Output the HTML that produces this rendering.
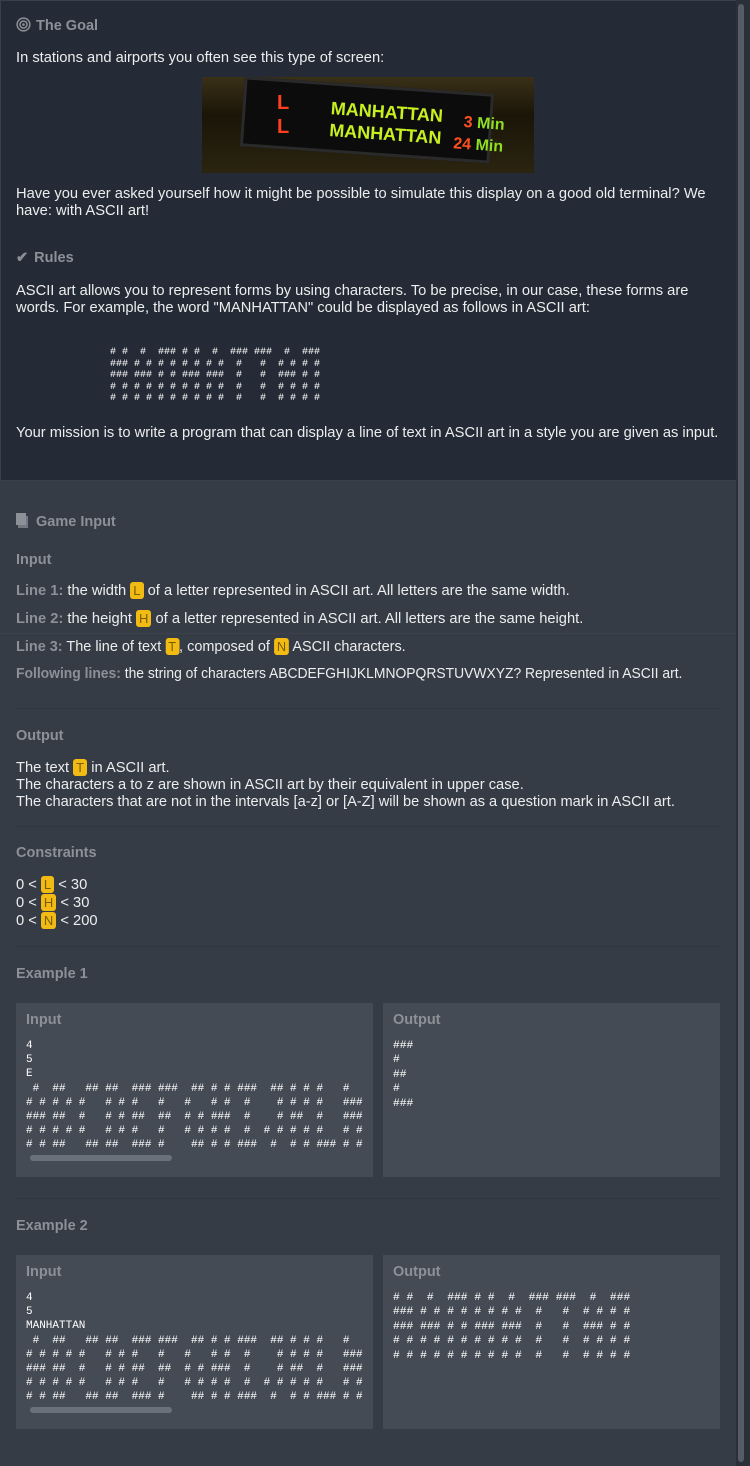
<!DOCTYPE html>
<html><head><meta charset="utf-8"><style>
*{margin:0;padding:0;box-sizing:border-box}
body{width:750px;height:1466px;background:#363c46;font-family:"Liberation Sans",sans-serif;color:#ecedee;font-size:14.7px;position:relative;overflow:hidden}
.a{position:absolute;white-space:nowrap}
.top{position:absolute;left:0;top:0;width:736px;height:481px;background:#252b36;border:1px solid #3a404a;border-right:none}
.h{font-weight:bold;color:#8c9197;font-size:14.5px}
.k{color:#8c9197;font-weight:bold}
.b{display:inline-block;background:#f2bb13;color:#7a5c00;border-radius:3px;padding:0 3px;line-height:17px;font-size:13px}
.hr{position:absolute;left:16px;width:704px;height:1px;background:#30363f}
.box{position:absolute;background:#454b55}
pre,pre.a{font-family:"Liberation Mono",monospace;color:#fff;white-space:pre}
.sb{position:absolute;left:30px;width:142px;height:6px;border-radius:3px;background:#6b717a}
</style></head><body>
<div class="top"></div>
<div style="position:absolute;left:736px;top:0;width:14px;height:1466px;background:#2a2f38"></div>
<div style="position:absolute;left:738px;top:4px;width:6px;height:1458px;background:#565c66;border-radius:3px"></div>

<div class="a h" style="left:16px;top:17px"><svg width="15" height="15" viewBox="0 0 16 16" style="vertical-align:-2px;margin-right:5px"><circle cx="8" cy="8" r="6.8" fill="none" stroke="#8c9197" stroke-width="1.6"/><circle cx="8" cy="8" r="3.8" fill="none" stroke="#8c9197" stroke-width="1.6"/><circle cx="8" cy="8" r="1.4" fill="#8c9197"/></svg>The Goal</div>
<div class="a" style="left:16px;top:50px">In stations and airports you often see this type of screen:</div>
<div class="a" style="left:202px;top:77px;width:332px;height:96px;background:linear-gradient(180deg,#3a3018,#1a1508 40%,#2a2410);overflow:hidden">
 <div style="position:absolute;left:40px;top:8px;width:250px;height:70px;background:#0c0c0c;transform:rotate(4deg);border:3px solid #2a2a2a"></div>
 <div style="position:absolute;left:75px;top:14px;color:#ff4020;font:bold 20px 'Liberation Sans Narrow','Liberation Sans',sans-serif;line-height:24px">L<br>L</div>
 <div style="position:absolute;left:128px;top:24px;color:#c8f020;font:bold 18px 'Liberation Sans Narrow','Liberation Sans',sans-serif;line-height:22px;transform:rotate(4deg)">MANHATTAN<br>MANHATTAN</div>
 <div style="position:absolute;left:252px;top:36px;color:#ff5020;font:bold 16px 'Liberation Sans Narrow',sans-serif;line-height:22px;transform:rotate(4deg)">&nbsp;&nbsp;3 <span style="color:#8ee020">Min</span><br>24 <span style="color:#8ee020">Min</span></div>
</div>
<div class="a" style="left:16px;top:186px">Have you ever asked yourself how it might be possible to simulate this display on a good old terminal? We</div>
<div class="a" style="left:16px;top:203px">have: with ASCII art!</div>

<div class="a h" style="left:16px;top:250px"><span style="margin-right:6px">✔</span>Rules</div>
<div class="a" style="left:16px;top:283px">ASCII art allows you to represent forms by using characters. To be precise, in our case, these forms are</div>
<div class="a" style="left:16px;top:300px">words. For example, the word "MANHATTAN" could be displayed as follows in ASCII art:</div>
<pre class="a" style="left:110px;top:347px;font-size:10px;line-height:11.5px"># #  #  ### # #  #  ### ###  #  ### 
### # # # # # # # #  #   #  # # # # 
### ### # # ### ###  #   #  ### # # 
# # # # # # # # # #  #   #  # # # # 
# # # # # # # # # #  #   #  # # # # </pre>
<div class="a" style="left:16px;top:425px">Your mission is to write a program that can display a line of text in ASCII art in a style you are given as input.</div>

<div class="a h" style="left:16px;top:513px"><svg width="14" height="15" viewBox="0 0 14 15" style="vertical-align:-2px;margin-right:6px"><rect x="0" y="0" width="10" height="12" fill="#8c9197"/><rect x="2" y="3" width="10" height="12" fill="#8c9197" opacity=".7"/></svg>Game Input</div>
<div class="a h" style="left:16px;top:552px">Input</div>
<div class="a" style="left:16px;top:582px"><span class="k">Line 1:</span> the width <span class="b">L</span> of a letter represented in ASCII art. All letters are the same width.</div>
<div class="a" style="left:16px;top:610px"><span class="k">Line 2:</span> the height <span class="b">H</span> of a letter represented in ASCII art. All letters are the same height.</div>
<div style="position:absolute;left:0;top:633px;width:736px;height:1px;background:#3c424c"></div>
<div class="a" style="left:16px;top:638px;transform:scaleX(0.985);transform-origin:left"><span class="k">Line 3:</span> The line of text <span class="b">T</span>, composed of <span class="b">N</span> ASCII characters.</div>
<div class="a" style="left:16px;top:666px;transform:scaleX(0.945);transform-origin:left"><span class="k">Following lines:</span> the string of characters ABCDEFGHIJKLMNOPQRSTUVWXYZ? Represented in ASCII art.</div>
<div class="hr" style="top:708px"></div>
<div class="a h" style="left:16px;top:728px">Output</div>
<div class="a" style="left:16px;top:759px">The text <span class="b">T</span> in ASCII art.</div>
<div class="a" style="left:16px;top:777px">The characters a to z are shown in ASCII art by their equivalent in upper case.</div>
<div class="a" style="left:16px;top:794px;transform:scaleX(0.994);transform-origin:left">The characters that are not in the intervals [a-z] or [A-Z] will be shown as a question mark in ASCII art.</div>
<div class="hr" style="top:826px"></div>
<div class="a h" style="left:16px;top:845px">Constraints</div>
<div class="a" style="left:16px;top:876px">0 &lt; <span class="b">L</span> &lt; 30</div>
<div class="a" style="left:16px;top:894px">0 &lt; <span class="b">H</span> &lt; 30</div>
<div class="a" style="left:16px;top:912px">0 &lt; <span class="b">N</span> &lt; 200</div>
<div class="hr" style="top:946px"></div>
<div class="a h" style="left:16px;top:966px">Example 1</div>

<div class="box" style="left:16px;top:1003px;width:357px;height:174px;overflow:hidden">
 <div class="a h" style="left:10px;top:9px">Input</div>
 <pre class="a" style="left:10px;top:36px;font-size:11px;line-height:14.2px;width:338px;overflow:hidden">4
5
E
 #  ##   ## ##  ### ###  ## # # ###  ## # # #   # 
# # # # #   # # #   #   #   # #  #    # # # #   ###
### ##  #   # # ##  ##  # # ###  #    # ##  #   ###
# # # # #   # # #   #   # # # #  #  # # # # #   # #
# # ##   ## ##  ### #    ## # # ###  #  # # ### # #</pre>
 <div class="sb" style="left:14px;top:152px"></div>
</div>
<div class="box" style="left:383px;top:1003px;width:337px;height:174px">
 <div class="a h" style="left:10px;top:9px">Output</div>
 <pre class="a" style="left:10px;top:36px;font-size:11.3px;line-height:14.4px">###
#
##
#
###</pre>
</div>
<div class="hr" style="top:1198px"></div>
<div class="a h" style="left:16px;top:1218px">Example 2</div>
<div class="box" style="left:16px;top:1255px;width:357px;height:174px;overflow:hidden">
 <div class="a h" style="left:10px;top:9px">Input</div>
 <pre class="a" style="left:10px;top:36px;font-size:11px;line-height:14.2px;width:338px;overflow:hidden">4
5
MANHATTAN
 #  ##   ## ##  ### ###  ## # # ###  ## # # #   # 
# # # # #   # # #   #   #   # #  #    # # # #   ###
### ##  #   # # ##  ##  # # ###  #    # ##  #   ###
# # # # #   # # #   #   # # # #  #  # # # # #   # #
# # ##   ## ##  ### #    ## # # ###  #  # # ### # #</pre>
 <div class="sb" style="left:14px;top:152px"></div>
</div>
<div class="box" style="left:383px;top:1255px;width:337px;height:174px">
 <div class="a h" style="left:10px;top:9px">Output</div>
 <pre class="a" style="left:10px;top:36px;font-size:11.3px;line-height:14.4px"># #  #  ### # #  #  ### ###  #  ### 
### # # # # # # # #  #   #  # # # # 
### ### # # ### ###  #   #  ### # # 
# # # # # # # # # #  #   #  # # # # 
# # # # # # # # # #  #   #  # # # # </pre>
</div>
</body></html>
